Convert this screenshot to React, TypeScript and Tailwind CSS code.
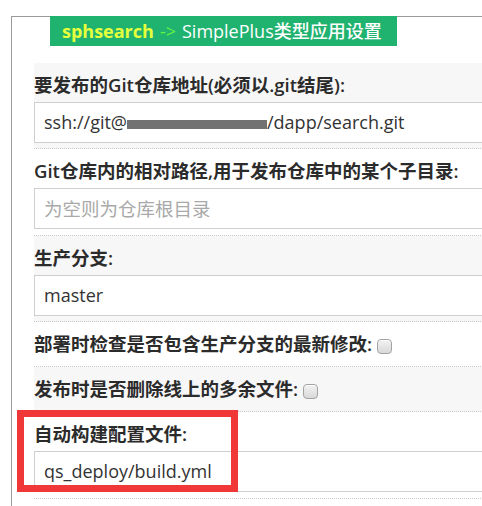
import { FC, ReactNode } from "react";

const font = "font-['Open_Sans','Noto_Sans_CJK_SC',sans-serif]";

const Label: FC<{ children: ReactNode }> = ({ children }) => (
  <div className="h-[26px] leading-[26px] text-[18.5px] font-semibold text-[#2b2b2b] whitespace-nowrap">
    {children}
  </div>
);

const Field: FC<{ children: ReactNode }> = ({ children }) => (
  <div className="mt-[4px] h-[41px] flex items-center px-[9px] bg-white border border-[#cfcfcf] text-[18px] text-[#333] whitespace-nowrap">
    {children}
  </div>
);

const Check: FC = () => (
  <span className="inline-block align-middle ml-[5px] w-[15px] h-[15px] rounded-[4px] border border-[#a3a3a3] bg-gradient-to-b from-[#f2f2f2] to-[#d9d9d9] shadow-[inset_0_1px_0_#fff]" />
);

const App: FC = () => {
  return (
    <div className={`w-[482px] h-[506px] overflow-hidden bg-white pt-4 pl-[11px] ${font}`}>
      <div className="w-[620px] h-[600px] border-l border-t border-[#9a9a9a]">
        {/* title tab */}
        <div className="-mt-px ml-[38px] w-[347px] h-[30px] bg-[#20b26f] flex items-center pl-[12px] text-[18px] whitespace-nowrap">
          <span className="font-bold text-[#e6ff3c]">sphsearch</span>
          <span className="text-[#66f244] mx-[6px]">-&gt;</span>
          <span className="font-medium text-white">SimplePlus类型应用设置</span>
        </div>

        <div className="mt-[17px] ml-[22px]">
          <div className="bg-[#f7f7f7] pt-[9px] pb-[5px] border-b border-dotted border-[#c8c8c8]">
            <Label>要发布的Git仓库地址(必须以.git结尾):</Label>
            <Field>
              <span>ssh://git@</span>
              <span className="inline-block w-[140px] h-[9px] mt-[3px] bg-[#727272] blur-[0.6px]" />
              <span>/dapp/search.git</span>
            </Field>
          </div>

          <div className="bg-white pt-[9px] pb-[6px] border-b border-dotted border-[#c8c8c8]">
            <Label>Git仓库内的相对路径,用于发布仓库中的某个子目录:</Label>
            <Field>
              <span className="text-[#a9a9a9] text-[18.5px]">为空则为仓库根目录</span>
            </Field>
          </div>

          <div className="bg-[#f7f7f7] pt-[9px] pb-[5px] border-b border-dotted border-[#c8c8c8]">
            <Label>生产分支:</Label>
            <Field>
              <span>master</span>
            </Field>
          </div>

          <div className="bg-white h-[45px] flex items-center border-b border-dotted border-[#c8c8c8]">
            <Label>
              部署时检查是否包含生产分支的最新修改:
              <Check />
            </Label>
          </div>

          <div className="bg-[#f7f7f7] h-[45px] flex items-center border-b border-dotted border-[#c8c8c8]">
            <Label>
              发布时是否删除线上的多余文件:
              <Check />
            </Label>
          </div>

          <div className="relative bg-white pt-[9px] pb-[6px] border-b border-dotted border-[#c8c8c8]">
            <Label>自动构建配置文件:</Label>
            <Field>
              <span>qs_deploy/build.yml</span>
            </Field>
            {/* annotation box */}
            <div className="absolute left-[-17px] top-[-2px] w-[221px] h-[82px] border-[7px] border-[#f03838]" />
          </div>
        </div>
      </div>
    </div>
  );
};

export default App;
